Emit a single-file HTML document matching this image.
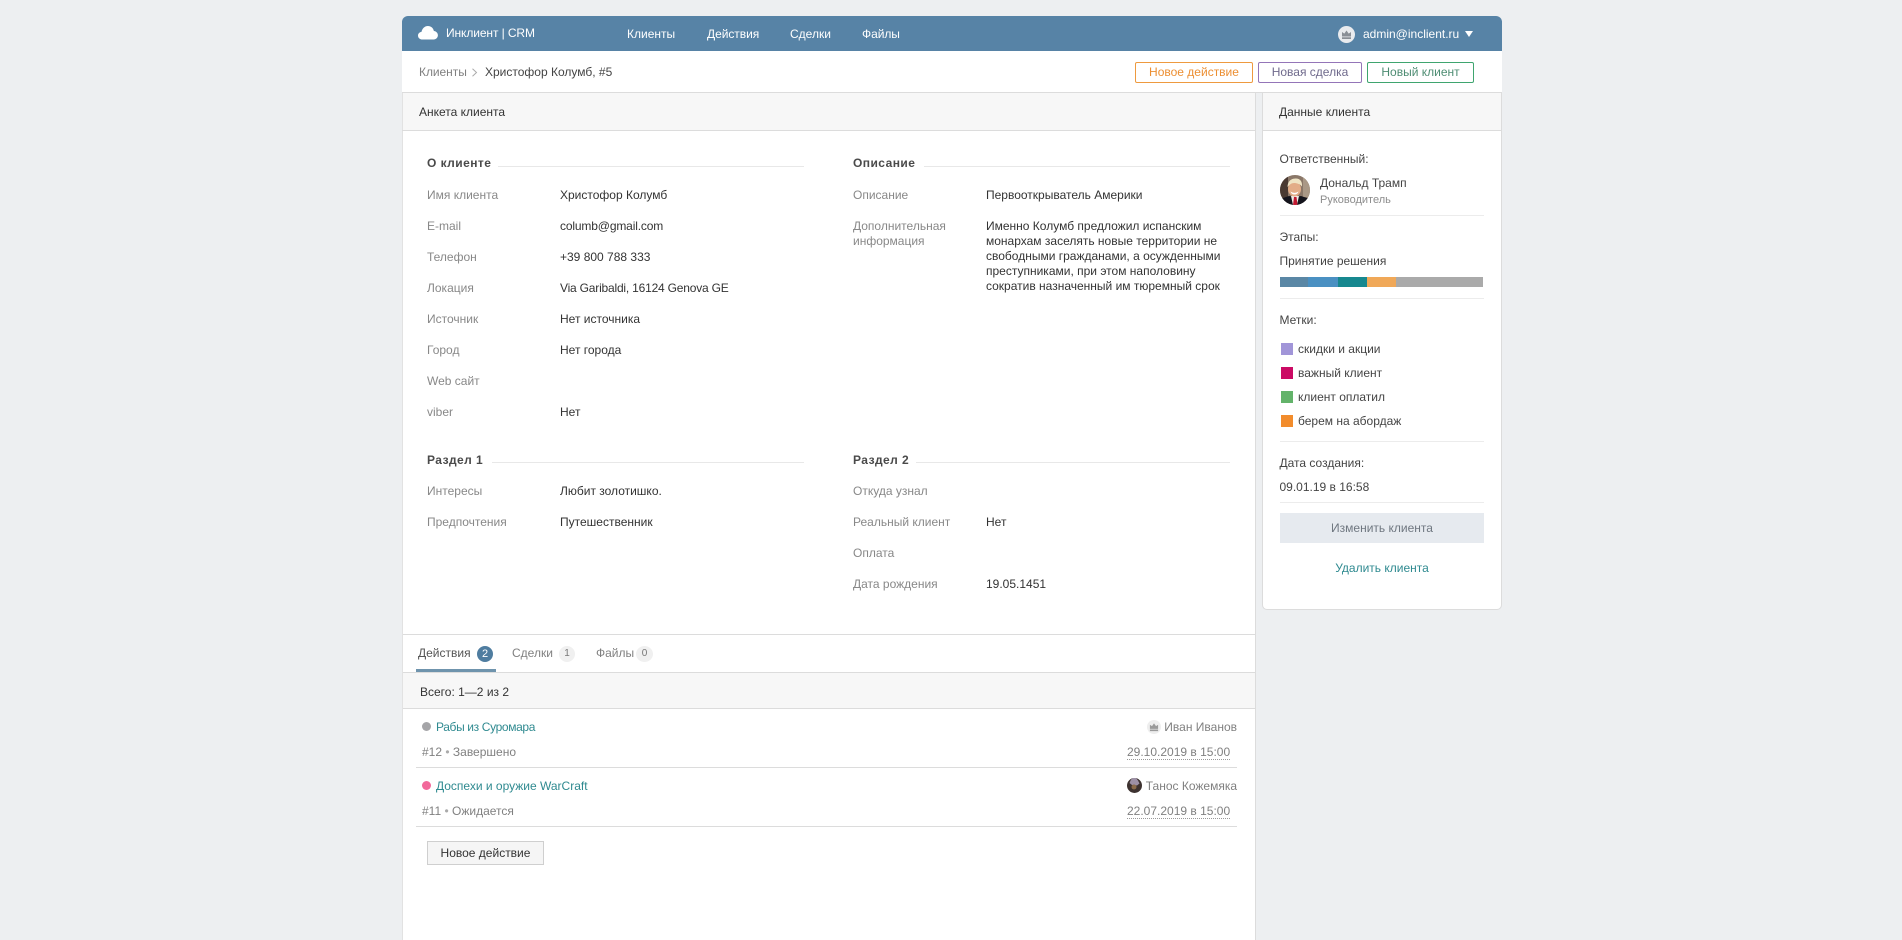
<!DOCTYPE html>
<html lang="ru">
<head>
<meta charset="utf-8">
<title>Инклиент | CRM</title>
<style>
html,body{margin:0;padding:0;width:1902px;height:940px;overflow:hidden;background:#edeff1;}
body{font-family:"Liberation Sans",Arial,sans-serif;font-size:12px;color:#333;position:relative;}
.t{position:absolute;white-space:nowrap;line-height:16px;height:16px;}
.b{position:absolute;}
.lb{color:#888;}
.v{color:#333;}
.h{font-weight:bold;color:#4a4a4a;letter-spacing:.45px;}
.hl{position:absolute;height:1px;background:#e8e8e8;}
.ln{position:absolute;height:1px;background:#dcdcdc;}
.sl{position:absolute;left:1280px;width:204px;height:1px;background:#ececec;}
.w{color:#fff;}
.btn{position:absolute;top:62px;height:19px;line-height:19px;text-align:center;border:1px solid;border-radius:2px;background:#fff;}
.sq{position:absolute;left:1281px;width:12px;height:12px;}
.lnk{color:#2f8a90;}
.gr{color:#808080;}
.s{color:#444;}
</style>
</head>
<body>
<!-- structure -->
<div class="b" style="left:402px;top:16px;width:1100px;height:35px;background:#5783a6;border-radius:6px 6px 0 0;"></div>
<div class="b" style="left:402px;top:51px;width:1100px;height:41px;background:#fff;"></div>
<div class="b" style="left:402px;top:92px;width:853px;height:848px;background:#fff;border-right:1px solid #dcdcdc;"></div>
<div class="b" style="left:402px;top:92px;width:1px;height:848px;background:#e2e2e2;"></div>
<div class="b" style="left:1262px;top:92px;width:238px;height:517px;background:#fff;border:1px solid #dcdcdc;border-top:0;border-radius:0 0 5px 5px;"></div>
<div class="ln" style="left:402px;top:92px;width:1100px;"></div>
<div class="b" style="left:403px;top:93px;width:852px;height:37px;background:#f7f7f7;"></div>
<div class="b" style="left:1263px;top:93px;width:238px;height:37px;background:#f7f7f7;"></div>
<div class="ln" style="left:402px;top:130px;width:853px;"></div>
<div class="ln" style="left:1262px;top:130px;width:240px;"></div>

<!-- header -->
<svg class="b" style="left:418px;top:25px" width="20" height="15" viewBox="0 0 20 15"><path d="M4.5 14.5C1.8 14.5 0 12.8 0 10.6 0 8.6 1.6 7.1 3.500 6.900 4.200 3.400 6.800 1 9.900 1c3.100 0 5.400 2.100 6 5 2.200.2 4 1.900 4 4.300 0 2.400-1.900 4.200-4.200 4.200z" fill="#fff"/></svg>
<div class="t w" style="left:446px;top:25px;letter-spacing:-.1px;">Инклиент | CRM</div>
<div class="t w" style="left:627px;top:26px;">Клиенты</div>
<div class="t w" style="left:707px;top:26px;letter-spacing:-.05px;">Действия</div>
<div class="t w" style="left:790px;top:26px;">Сделки</div>
<div class="t w" style="left:862px;top:26px;letter-spacing:-.05px;">Файлы</div>
<div class="b" style="left:1338px;top:26px;width:17px;height:17px;border-radius:50%;background:#e9ebee;"></div>
<svg class="b" style="left:1341px;top:29px" width="11" height="11" viewBox="0 0 11 11"><path d="M1 3l2.300 1.600L5.500 1.500l2.200 3.100L10 3v4.500H1zM1 8.300h9V10H1z" fill="#8a8f96"/></svg>
<div class="t w" style="left:1363px;top:26px;">admin@inclient.ru</div>
<svg class="b" style="left:1465px;top:31px" width="8" height="6" viewBox="0 0 8 6"><path d="M0 0h8L4 6z" fill="#fff"/></svg>

<!-- breadcrumb -->
<div class="t gr" style="left:419px;top:64px;letter-spacing:-.05px;">Клиенты</div>
<svg class="b" style="left:471px;top:68px" width="7" height="9" viewBox="0 0 7 9"><path d="M1.500 .8L5.500 4.500 1.500 8.200" fill="none" stroke="#aaa" stroke-width="1"/></svg>
<div class="t" style="left:485px;top:64px;color:#444;">Христофор Колумб, #5</div>

<div class="btn" style="left:1135px;width:116px;border-color:#ee9a3f;color:#ec8f33;">Новое действие</div>
<div class="btn" style="left:1258px;width:102px;border-color:#9475b8;color:#6f6a8c;">Новая сделка</div>
<div class="btn" style="left:1367px;width:105px;border-color:#3fa56f;color:#4d8c72;">Новый клиент</div>

<div class="t" style="left:419px;top:104px;color:#333;">Анкета клиента</div>
<div class="t" style="left:1279px;top:104px;color:#333;">Данные клиента</div>

<!-- left section -->
<div class="t h" style="left:427px;top:155px;">О клиенте</div>
<div class="hl" style="left:498px;top:166px;width:306px;"></div>
<div class="t lb" style="left:427px;top:187px;">Имя клиента</div><div class="t v" style="left:560px;top:187px;">Христофор Колумб</div>
<div class="t lb" style="left:427px;top:218px;">E-mail</div><div class="t v" style="left:560px;top:218px;letter-spacing:-.15px;">columb@gmail.com</div>
<div class="t lb" style="left:427px;top:249px;">Телефон</div><div class="t v" style="left:560px;top:249px;">+39 800 788 333</div>
<div class="t lb" style="left:427px;top:280px;">Локация</div><div class="t v" style="left:560px;top:280px;letter-spacing:-.2px;">Via Garibaldi, 16124 Genova GE</div>
<div class="t lb" style="left:427px;top:311px;">Источник</div><div class="t v" style="left:560px;top:311px;">Нет источника</div>
<div class="t lb" style="left:427px;top:342px;">Город</div><div class="t v" style="left:560px;top:342px;">Нет города</div>
<div class="t lb" style="left:427px;top:373px;">Web сайт</div>
<div class="t lb" style="left:427px;top:404px;">viber</div><div class="t v" style="left:560px;top:404px;">Нет</div>

<!-- description -->
<div class="t h" style="left:853px;top:155px;">Описание</div>
<div class="hl" style="left:924px;top:166px;width:306px;"></div>
<div class="t lb" style="left:853px;top:187px;">Описание</div><div class="t v" style="left:986px;top:187px;">Первооткрыватель Америки</div>
<div class="t lb" style="left:853px;top:218px;">Дополнительная</div>
<div class="t lb" style="left:853px;top:233px;">информация</div>
<div class="t v" style="left:986px;top:218px;">Именно Колумб предложил испанским</div>
<div class="t v" style="left:986px;top:233px;">монархам заселять новые территории не</div>
<div class="t v" style="left:986px;top:248px;">свободными гражданами, а осужденными</div>
<div class="t v" style="left:986px;top:263px;">преступниками, при этом наполовину</div>
<div class="t v" style="left:986px;top:278px;">сократив назначенный им тюремный срок</div>

<!-- section 1 -->
<div class="t h" style="left:427px;top:452px;">Раздел 1</div>
<div class="hl" style="left:492px;top:462px;width:312px;"></div>
<div class="t lb" style="left:427px;top:483px;">Интересы</div><div class="t v" style="left:560px;top:483px;">Любит золотишко.</div>
<div class="t lb" style="left:427px;top:514px;">Предпочтения</div><div class="t v" style="left:560px;top:514px;">Путешественник</div>

<!-- section 2 -->
<div class="t h" style="left:853px;top:452px;">Раздел 2</div>
<div class="hl" style="left:916px;top:462px;width:314px;"></div>
<div class="t lb" style="left:853px;top:483px;">Откуда узнал</div>
<div class="t lb" style="left:853px;top:514px;">Реальный клиент</div><div class="t v" style="left:986px;top:514px;">Нет</div>
<div class="t lb" style="left:853px;top:545px;">Оплата</div>
<div class="t lb" style="left:853px;top:576px;">Дата рождения</div><div class="t v" style="left:986px;top:576px;">19.05.1451</div>

<!-- tabs -->
<div class="ln" style="left:403px;top:634px;width:852px;"></div>
<div class="t" style="left:418px;top:645px;color:#555;">Действия</div>
<div class="b" style="left:477px;top:646px;width:16px;height:16px;line-height:16px;border-radius:50%;background:#4f7da0;color:#fff;text-align:center;font-size:11px;">2</div>
<div class="t" style="left:512px;top:645px;color:#808080;">Сделки</div>
<div class="b" style="left:559px;top:646px;width:16px;height:16px;line-height:16px;border-radius:50%;background:#f0f0f0;color:#777;text-align:center;font-size:10px;">1</div>
<div class="t" style="left:596px;top:645px;color:#808080;">Файлы</div>
<div class="b" style="left:636px;top:646px;width:17px;height:16px;line-height:16px;border-radius:50%;background:#f0f0f0;color:#777;text-align:center;font-size:10px;">0</div>
<div class="b" style="left:403px;top:672px;width:852px;height:36px;background:#f7f7f7;"></div>
<div class="ln" style="left:403px;top:672px;width:852px;"></div>
<div class="b" style="left:416px;top:669px;width:80px;height:3px;background:#6f94ad;"></div>
<div class="ln" style="left:403px;top:708px;width:852px;"></div>
<div class="t" style="left:420px;top:684px;color:#333;">Всего: 1—2 из 2</div>

<!-- rows -->
<div class="b" style="left:422px;top:722px;width:9px;height:9px;border-radius:50%;background:#a5a5a8;"></div>
<div class="t lnk" style="left:436px;top:719px;letter-spacing:-.36px;">Рабы из Суромара</div>
<div class="t gr" style="left:422px;top:744px;">#12 <span style="color:#aaa">•</span> Завершено</div>
<div class="b" style="left:1147px;top:720px;width:14px;height:14px;border-radius:50%;background:#eeeeee;"></div>
<svg class="b" style="left:1149px;top:722px" width="10" height="10" viewBox="0 0 11 11"><path d="M1 3l2.300 1.600L5.500 1.500l2.200 3.100L10 3v4.500H1zM1 8.300h9V10H1z" fill="#9a9a9a"/></svg>
<div class="t gr" style="right:665px;top:719px;">Иван Иванов</div>
<div class="t gr" style="left:1127px;top:744px;height:15px;border-bottom:1px dotted #999;">29.10.2019 в 15:00</div>
<div class="ln" style="left:416px;top:767px;width:821px;"></div>

<div class="b" style="left:422px;top:781px;width:9px;height:9px;border-radius:50%;background:#f2699b;"></div>
<div class="t lnk" style="left:436px;top:778px;">Доспехи и оружие WarCraft</div>
<div class="t gr" style="left:422px;top:803px;">#11 <span style="color:#aaa">•</span> Ожидается</div>
<svg class="b" style="left:1127px;top:778px" width="15" height="15" viewBox="0 0 15 15"><circle cx="7.500" cy="7.500" r="7.500" fill="#3d3230"/><path d="M4 1.500L6 0h3l2 2.500 1.500 3-2.500 2-5-.5-2.500-2z" fill="#9d90a6"/><circle cx="7" cy="9" r="2.500" fill="#8a6a4a"/></svg>
<div class="t gr" style="right:665px;top:778px;">Танос Кожемяка</div>
<div class="t gr" style="left:1127px;top:803px;height:15px;border-bottom:1px dotted #999;">22.07.2019 в 15:00</div>
<div class="ln" style="left:416px;top:826px;width:821px;"></div>

<div class="b" style="left:427px;top:841px;width:115px;height:22px;line-height:22px;text-align:center;background:#f5f5f5;border:1px solid #cfcfcf;color:#333;">Новое действие</div>

<!-- sidebar -->
<div class="t s" style="left:1279.500px;top:151px;">Ответственный:</div>
<svg class="b" style="left:1280px;top:175px" width="30" height="30" viewBox="0 0 30 30">
<defs><clipPath id="c"><circle cx="15" cy="15" r="15"/></clipPath></defs>
<g clip-path="url(#c)">
<rect width="30" height="30" fill="#8a7768"/>
<rect width="8" height="30" fill="#4a3a32"/>
<rect x="23" width="7" height="22" fill="#a99886"/>
<path d="M0 30V24l9-3 6 1 6-1 9 3v6z" fill="#14141c"/>
<path d="M11 21h8l-2 9h-4z" fill="#f1ece6"/>
<path d="M14 22h2.500l1 8h-4.500z" fill="#c01830"/>
<ellipse cx="14.500" cy="14" rx="6.500" ry="7.500" fill="#e3ad88"/>
<path d="M7.500 12C8 5 12 3.500 16 3.500s6.500 3 6 8c-2-2.500-5-3.500-8-3.500-2.500 0-4.500 1.500-6.500 4z" fill="#efe4c4"/>
<path d="M10.500 16.500q4 2.800 8 0-1 3-4 3t-4-3z" fill="#fff"/>
</g></svg>
<div class="t s" style="left:1320px;top:175px;">Дональд Трамп</div>
<div class="t" style="left:1320px;top:192px;font-size:11px;color:#8c8c8c;">Руководитель</div>
<div class="sl" style="top:215px;"></div>
<div class="t s" style="left:1279.500px;top:229px;">Этапы:</div>
<div class="t s" style="left:1279.500px;top:253px;">Принятие решения</div>
<div class="b" style="left:1280px;top:277px;width:28px;height:10px;background:#5a87a5;"></div>
<div class="b" style="left:1308px;top:277px;width:30px;height:10px;background:#4a90c2;"></div>
<div class="b" style="left:1338px;top:277px;width:29px;height:10px;background:#17888f;"></div>
<div class="b" style="left:1367px;top:277px;width:29px;height:10px;background:#f0a858;"></div>
<div class="b" style="left:1396px;top:277px;width:87px;height:10px;background:#aaaaaa;"></div>
<div class="sl" style="top:298px;"></div>
<div class="t s" style="left:1279.500px;top:312px;">Метки:</div>
<div class="sq" style="top:343px;background:#a195d8;"></div><div class="t s" style="left:1298px;top:341px;">скидки и акции</div>
<div class="sq" style="top:367px;background:#cb0a64;"></div><div class="t s" style="left:1298px;top:365px;">важный клиент</div>
<div class="sq" style="top:391px;background:#63b36a;"></div><div class="t s" style="left:1298px;top:389px;">клиент оплатил</div>
<div class="sq" style="top:415px;background:#f28c2c;"></div><div class="t s" style="left:1298px;top:413px;">берем на абордаж</div>
<div class="sl" style="top:441px;"></div>
<div class="t s" style="left:1279.500px;top:455px;">Дата создания:</div>
<div class="t s" style="left:1279.500px;top:479px;">09.01.19 в 16:58</div>
<div class="sl" style="top:502px;"></div>
<div class="b" style="left:1280px;top:513px;width:204px;height:30px;line-height:30px;text-align:center;background:#e6eaef;color:#6f7780;">Изменить клиента</div>
<div class="t lnk" style="left:1280px;width:204px;text-align:center;top:560px;">Удалить клиента</div>
</body>
</html>
